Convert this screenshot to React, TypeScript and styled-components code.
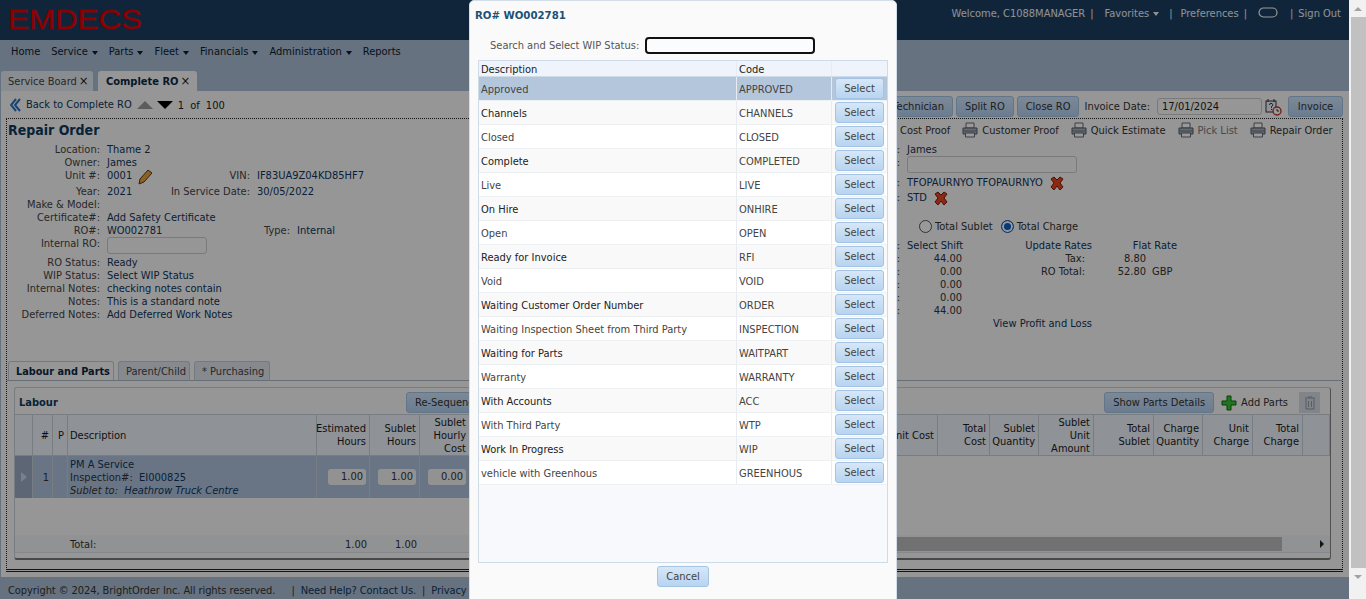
import React from 'react'
import styled, { createGlobalStyle } from 'styled-components'

const GlobalStyle = createGlobalStyle`
  html, body { margin: 0; padding: 0; height: 100%; overflow: hidden; }
  body { font-family: "DejaVu Sans Condensed", "DejaVu Sans", sans-serif; font-size: 11px; color: #333; }
  * { box-sizing: border-box; }
`

const Page = styled.div`
  display: flex;
  width: 1366px;
  height: 599px;
  overflow: hidden;
`

const Main = styled.div`
  position: relative;
  width: 1349px;
  height: 599px;
  display: flex;
  flex-direction: column;
  background: #aabed4;
`

const Scrollbar = styled.div`
  width: 17px;
  height: 599px;
  background: #f1f1f1;
  display: flex;
  flex-direction: column;
  align-items: center;
`

const ScrollThumb = styled.div`
  width: 15px;
  height: 551px;
  align-self: flex-end;
  background: #c1c1c1;
`

const ScrollEnd = styled.div`
  width: 17px;
  height: 17px;
  display: flex;
  align-items: center;
  justify-content: center;
`

const ScrollArrow = styled.span<{ $up?: boolean }>`
  width: 0;
  height: 0;
  border-left: 4px solid transparent;
  border-right: 4px solid transparent;
  ${(p) => (p.$up ? 'border-bottom' : 'border-top')}: 4px solid #a3a3a3;
`

const Dim = styled.div`
  position: absolute;
  inset: 0;
  background: rgba(0, 0, 0, 0.4);
`

const Header = styled.header`
  height: 40px;
  flex: none;
  background: #1b3e62;
  display: flex;
  justify-content: space-between;
  padding: 5px 8px 0 8px;
`

const UserBar = styled.div`
  display: flex;
  align-items: flex-start;
  padding-top: 2px;
  color: #eef2f6;
  gap: 5px;
  height: 20px;
  line-height: 14px;
`

const UserItem = styled.span<{ $l?: number; $r?: number }>`
  padding: 0 ${(p) => p.$r ?? 0}px 0 ${(p) => p.$l ?? 0}px;
  display: inline-flex;
  align-items: center;
`

const Nav = styled.nav`
  height: 31px;
  flex: none;
  display: flex;
  align-items: flex-start;
  padding: 5px 0 0 11px;
  gap: 11px;
  line-height: 13px;
  color: #0d1c2e;
`

const Caret = styled.span`
  display: inline-block;
  width: 0;
  height: 0;
  margin-left: 4px;
  vertical-align: 0;
  border-left: 3.5px solid transparent;
  border-right: 3.5px solid transparent;
  border-top: 4px solid currentColor;
`

const Tabs = styled.div`
  height: 20px;
  flex: none;
  display: flex;
  gap: 5px;
  padding-left: 1px;
`

const TabItem = styled.div<{ $active?: boolean; $w: number }>`
  width: ${(p) => p.$w}px;
  display: flex;
  align-items: center;
  gap: 2px;
  padding-left: ${(p) => (p.$active ? 8 : 7)}px;
  border-radius: 3px 3px 0 0;
  background: ${(p) => (p.$active ? '#fafafa' : '#e4ebf2')};
  color: ${(p) => (p.$active ? '#0d2a45' : '#444')};
  font-weight: ${(p) => (p.$active ? 700 : 400)};
  white-space: nowrap;
`

const TabClose = styled.span`
  font-size: 13px;
  font-weight: 400;
  line-height: 14px;
  color: #222;
`

const Content = styled.div`
  height: 486px;
  flex: none;
  margin: 0 0 0 1px;
  background: #fafafa;
  display: flex;
  flex-direction: column;
  padding: 0 6px 0 5px;
`

const Toolbar = styled.div`
  height: 27px;
  flex: none;
  display: flex;
  align-items: center;
  justify-content: space-between;
  padding: 0 0 0 4px;
`

const Group = styled.div<{ $gap?: number; $top?: number }>`
  display: flex;
  align-items: center;
  gap: ${(p) => p.$gap ?? 6}px;
  padding-top: ${(p) => p.$top ?? 0}px;
`

const LinkText = styled.span`
  color: #10365c;
  white-space: nowrap;
`

const Pager = styled.span`
  padding-top: 2px;
  word-spacing: 3px;
  color: #222;
`

const Arrow = styled.span<{ $up?: boolean; $dark?: boolean }>`
  display: inline-block;
  width: 0;
  height: 0;
  border-left: 8px solid transparent;
  border-right: 8px solid transparent;
  ${(p) => (p.$up ? 'border-bottom' : 'border-top')}: 8px solid ${(p) => (p.$dark ? '#000' : '#999')};
`

const ActionButton = styled.button`
  height: 21px;
  padding: 0 8px;
  border: 1px solid #a3c4e4;
  border-radius: 3px;
  background: linear-gradient(#cfe4fa, #b2d0f0);
  color: #333;
  font: inherit;
  white-space: nowrap;
`

const InvoiceButton = styled(ActionButton)`
  width: 55px;
`

const TextBox = styled.div<{ $w: number; $h?: number }>`
  width: ${(p) => p.$w}px;
  height: ${(p) => p.$h ?? 17}px;
  border: 1px solid #ccc;
  border-radius: 3px;
  background: #fafafa;
  padding: 0 4px;
  line-height: 15px;
  color: #222;
  flex: none;
`

const DateLabel = styled.span`
  margin: 0 4px 0 2px;
  color: #333;
`

const IconSlot = styled.span`
  display: inline-flex;
  margin-right: 3px;
`

const Order = styled.div`
  flex: 1;
  border: 1px dotted #222;
  border-bottom: 3px double #222;
  margin-bottom: 5px;
  display: flex;
  flex-direction: column;
  min-height: 0;
`

const Summary = styled.div`
  height: 242px;
  flex: none;
  display: grid;
  grid-template-columns: 861px 1fr;
`

const SummaryLeft = styled.div`
  padding-left: 1px;
`

const Title = styled.h1`
  margin: 2px 0 4px;
  font-size: 14px;
  line-height: 18px;
  color: #0c3a5f;
`

const FieldRow = styled.div<{ $h?: number }>`
  display: flex;
  height: ${(p) => p.$h ?? 13}px;
  line-height: 13px;
  white-space: nowrap;
`

const Label = styled.span<{ $w: number }>`
  width: ${(p) => p.$w}px;
  flex: none;
  text-align: right;
  color: #444;
  margin-right: 7px;
`

const Value = styled.span<{ $w?: number; $right?: boolean }>`
  color: #10365c;
  display: inline-flex;
  align-items: flex-start;
  gap: 6px;
  flex: none;
  svg { flex: none; }
  ${(p) => (p.$w ? `width: ${p.$w}px;` : '')}
  ${(p) => (p.$right ? 'justify-content: flex-end; color: #333;' : '')}
`

const Currency = styled.span`
  margin-left: 6px;
  color: #333;
`

const SummaryRight = styled.div``

const PrintRow = styled.div`
  height: 24px;
  display: flex;
  align-items: center;
  padding: 0 0 2px 32px;
  gap: 12px;
  color: #333;
  white-space: nowrap;
`

const PrintLink = styled.span<{ $off?: boolean }>`
  display: flex;
  align-items: center;
  gap: 4px;
  color: ${(p) => (p.$off ? '#777' : '#333')};
`

const Radios = styled.div`
  display: flex;
  align-items: center;
  margin: 13px 0 5px 51px;
  height: 15px;
  gap: 8px;
  color: #333;
`

const Radio = styled.span<{ $on?: boolean }>`
  display: inline-block;
  width: 13px;
  height: 13px;
  margin-right: 3px;
  vertical-align: -3px;
  border-radius: 50%;
  border: 1px solid ${(p) => (p.$on ? '#0a5fc4' : '#555')};
  background: ${(p) => (p.$on ? '#0a5fc4' : '#fff')};
  box-shadow: ${(p) => (p.$on ? 'inset 0 0 0 2px #fff' : 'none')};
`

const SubTabs = styled.div`
  height: 20px;
  flex: none;
  display: flex;
  gap: 4px;
  padding-left: 1px;
  border-bottom: 1px solid #aab8c6;
`

const SubTab = styled.div<{ $active?: boolean; $w: number }>`
  width: ${(p) => p.$w}px;
  display: flex;
  align-items: center;
  padding-left: 7px;
  border: 1px solid #c3ccd6;
  border-bottom: none;
  border-radius: 3px 3px 0 0;
  background: ${(p) => (p.$active ? '#fafafa' : '#dfe5ec')};
  font-weight: ${(p) => (p.$active ? 700 : 400)};
  font-size: ${(p) => (p.$active ? 10.8 : 11)}px;
  color: ${(p) => (p.$active ? '#0d2a45' : '#444')};
  white-space: nowrap;
`

const GridPanel = styled.div`
  margin: 6px 11px 0 7px;
  height: 173px;
  border: 1px solid #c8d0d8;
  border-right-color: #888;
  border-bottom: 2px solid #777;
  border-radius: 3px;
  display: flex;
  flex-direction: column;
`

const GridBar = styled.div`
  height: 26px;
  flex: none;
  display: flex;
  align-items: center;
  justify-content: space-between;
  padding: 3px 10px 0 4px;
`

const GridTitle = styled.div`
  width: 387px;
  font-weight: 700;
  color: #0c3a5f;
`

const AddParts = styled.span`
  display: flex;
  align-items: center;
  gap: 4px;
  margin-right: 4px;
`

const TrashBox = styled.div`
  width: 21px;
  height: 21px;
  display: flex;
  align-items: center;
  justify-content: center;
  background: #d7dde4;
`

const columns = '18px 20px 15px 249px 53px 50px 50px 415px 53px 52px 49px 55px 60px 49px 50px 50px 1fr'

const GridHead = styled.div`
  display: grid;
  grid-template-columns: ${columns};
  height: 42px;
  flex: none;
  background: #eef3fa;
  border-top: 1px solid #c8d0d8;
  border-bottom: 1px solid #c8d0d8;
`

const HeadCell = styled.div<{ $left?: boolean }>`
  display: flex;
  align-items: center;
  justify-content: ${(p) => (p.$left ? 'flex-start' : 'flex-end')};
  padding: 0 3px 0 ${(p) => (p.$left ? 2 : 3)}px;
  text-align: ${(p) => (p.$left ? 'left' : 'right')};
  line-height: 13px;
  color: #1c1c1c;
  border-right: 1px solid #c8d0d8;
`

const GridRow = styled.div`
  display: grid;
  grid-template-columns: ${columns};
  height: 42px;
  flex: none;
`

const RowCell = styled.div<{ $left?: boolean; $dark?: boolean }>`
  display: flex;
  flex-direction: column;
  justify-content: center;
  align-items: ${(p) => (p.$left ? 'flex-start' : p.$dark ? 'center' : 'flex-end')};
  padding: 0 3px 0 ${(p) => (p.$left ? 2 : 3)}px;
  line-height: 13px;
  background: ${(p) => (p.$dark ? '#99abc2' : '#b0c4de')};
  border-right: 1px solid #c8d0d8;
  white-space: nowrap;
`

const RowHandle = styled.span`
  width: 0;
  height: 0;
  border-top: 5px solid transparent;
  border-bottom: 5px solid transparent;
  border-left: 6px solid #c9d6e6;
`

const NumberBox = styled.div`
  width: 38px;
  height: 16px;
  border-radius: 3px;
  background: #f4f4f4;
  text-align: right;
  padding-right: 3px;
  line-height: 16px;
  color: #333;
`

const GridSpace = styled.div`
  flex: 1;
`

const TotalRow = styled.div`
  display: grid;
  grid-template-columns: 18px 20px 15px 249px 53px 50px 1fr;
  height: 18px;
  margin-bottom: 5px;
  flex: none;
  align-items: center;
  background: #f1f3f5;
  border-bottom: 1px solid #dde2e8;
`

const TotalCell = styled.div<{ $left?: boolean }>`
  padding: 2px 3px 0 ${(p) => (p.$left ? 2 : 3)}px;
  text-align: ${(p) => (p.$left ? 'left' : 'right')};
  color: #333;
`

const HScroll = styled.div`
  display: flex;
  height: 14px;
  margin-left: 100px;
  align-items: stretch;
`

const HThumb = styled.div`
  flex: 1;
  background: #bdbdbd;
`

const HEnd = styled.div`
  width: 48px;
  display: flex;
  align-items: center;
  justify-content: flex-end;
  padding-right: 6px;
`

const HArrow = styled.span`
  width: 0;
  height: 0;
  border-top: 4px solid transparent;
  border-bottom: 4px solid transparent;
  border-left: 4px solid #222;
`

const Footer = styled.footer`
  height: 22px;
  flex: none;
  display: flex;
  align-items: center;
  padding: 4px 0 0 8px;
  color: #333;
  letter-spacing: -0.08px;
  white-space: nowrap;
`

const Separator = styled.span<{ $l: number; $r: number }>`
  margin: 0 ${(p) => p.$r}px 0 ${(p) => p.$l}px;
`

const Modal = styled.div`
  position: absolute;
  left: 469px;
  top: 0;
  width: 428px;
  height: 610px;
  background: #fafafa;
  border: 1px solid #d4dee8;
  border-radius: 5px;
  padding: 0 8px;
  display: flex;
  flex-direction: column;
`

const ModalTitle = styled.div`
  height: 30px;
  padding-top: 8px;
  margin-left: -3px;
  font-size: 11.3px;
  font-weight: 700;
  color: #1a5276;
`

const SearchRow = styled.div`
  height: 29px;
  display: flex;
  align-items: center;
  padding-left: 12px;
  gap: 6px;
  color: #555;
`

const SearchInput = styled.div`
  width: 170px;
  height: 17px;
  background: #fafcfe;
  border: 2px solid #111;
  border-radius: 4px;
`

const StatusTable = styled.div`
  width: 410px;
  height: 503px;
  flex: none;
  background: #f7f9fc;
  border: 1px solid #cfdbe6;
`

const statusColumns = '258px 95px 1fr'

const StatusHead = styled.div`
  display: grid;
  grid-template-columns: ${statusColumns};
  height: 16px;
  background: #eff3fb;
  border-bottom: 1px solid #cfdbe6;
  color: #222;
`

const StatusRow = styled.div<{ $state: 'on' | 'odd' | 'even' }>`
  display: grid;
  grid-template-columns: ${statusColumns};
  height: 24px;
  align-items: stretch;
  background: ${(p) => (p.$state === 'on' ? '#b3c6dc' : p.$state === 'odd' ? '#f9f9f9' : '#fff')};
  border-bottom: 1px solid #eef1f4;
`

const StatusCell = styled.div<{ $strong?: boolean }>`
  display: flex;
  align-items: center;
  padding: 2px 0 0 2px;
  border-right: 1px solid #e8ecf0;
  color: ${(p) => (p.$strong ? '#222' : '#444')};
`

const ButtonCell = styled.div`
  padding: 1px 0 0 3px;
`

const SelectButton = styled.button`
  width: 49px;
  height: 21px;
  padding: 0;
  border: 1px solid #a3c4e4;
  border-radius: 3px;
  background: linear-gradient(#d6e7f8, #b8d4f0);
  color: #444;
  font: inherit;
`

const ModalActions = styled.div`
  display: flex;
  justify-content: center;
  padding-top: 3px;
`

const CancelButton = styled(SelectButton)`
  width: 52px;
`

const statuses: [string, string][] = [
  ['Approved', 'APPROVED'],
  ['Channels', 'CHANNELS'],
  ['Closed', 'CLOSED'],
  ['Complete', 'COMPLETED'],
  ['Live', 'LIVE'],
  ['On Hire', 'ONHIRE'],
  ['Open', 'OPEN'],
  ['Ready for Invoice', 'RFI'],
  ['Void', 'VOID'],
  ['Waiting Customer Order Number', 'ORDER'],
  ['Waiting Inspection Sheet from Third Party', 'INSPECTION'],
  ['Waiting for Parts', 'WAITPART'],
  ['Warranty', 'WARRANTY'],
  ['With Accounts', 'ACC'],
  ['With Third Party', 'WTP'],
  ['Work In Progress', 'WIP'],
  ['vehicle with Greenhous', 'GREENHOUS'],
]

const Logo = () => (
  <svg width="136" height="30" viewBox="0 0 136 30">
    <text x="0" y="24" fontFamily="Liberation Sans" fontWeight="400" fontSize="27" textLength="134" lengthAdjust="spacingAndGlyphs" fill="#e80000" stroke="#e80000" strokeWidth="0.3">
      EMDECS
    </text>
  </svg>
)

const ChatBubble = () => (
  <svg width="20" height="12" viewBox="0 0 20 12">
    <rect x="1" y="1" width="18" height="9" rx="4.5" fill="none" stroke="#fff" strokeWidth="1.2" />
  </svg>
)

const Pencil = () => (
  <svg width="15" height="16" viewBox="0 0 15 16">
    <path d="M1 15l1-5 8-9 4 3-8 9z" fill="#e8a33a" stroke="#5a3a10" />
  </svg>
)

const RedX = () => (
  <svg width="15" height="15" viewBox="0 0 15 15">
    <path d="M2 3l3-2 3 3 3-3 3 2-3 4 3 4-3 3-3-4-3 4-3-3 3-4z" fill="#e8451f" stroke="#7a1c0c" />
  </svg>
)

const CalendarClock = () => (
  <svg width="17" height="18" viewBox="0 0 17 18">
    <rect x="1" y="3" width="10" height="11" fill="#eef3fa" stroke="#334" />
    <path d="M3 1v3M9 1v3" stroke="#334" />
    <path d="M4.5 7a1.6 1.6 0 1 1 2 1.5v1.5M6.5 11v1" fill="none" stroke="#334" />
    <circle cx="12" cy="13" r="4" fill="#fff" stroke="#c0392b" strokeWidth="1.4" />
    <path d="M12 11v2h2" stroke="#333" fill="none" />
  </svg>
)

const Printer = () => (
  <svg width="16" height="16" viewBox="0 0 16 16">
    <path d="M4 1h8v5H4z" fill="#fff" stroke="#667" />
    <path d="M1 6h14v6H1z" fill="#a9b2bc" stroke="#555e68" />
    <path d="M1 9h14" stroke="#6b747e" />
    <path d="M3.5 11h9v4h-9z" fill="#fff" stroke="#667" />
  </svg>
)

const Plus = () => (
  <svg width="16" height="16" viewBox="0 0 16 16">
    <path d="M6 1h4v5h5v4h-5v5H6v-5H1V6h5z" fill="#38c438" stroke="#0e6a0e" />
  </svg>
)

const Trash = () => (
  <svg width="10" height="14" viewBox="0 0 10 14">
    <path d="M0 2h10M3 1h4M1 3v10h8V3M3.5 5v6M6.5 5v6" fill="none" stroke="#8f99a5" />
  </svg>
)

const Back = () => (
  <svg width="11" height="14" viewBox="0 0 11 14">
    <path d="M6 1L1 7l5 6M10 1L5 7l5 6" fill="none" stroke="#2b74c7" strokeWidth="2" />
  </svg>
)

const Field = ({ label, value }: { label: string; value?: string }) => (
  <FieldRow>
    <Label $w={92}>{label}</Label>
    <Value>{value}</Value>
  </FieldRow>
)

const App = () => {
  return (
    <Page>
      <GlobalStyle />
      <Main>
        <Header>
          <Logo />
          <UserBar>
            <span>Welcome, C1088MANAGER</span><span>|</span>
            <UserItem $l={6} $r={5}>Favorites<Caret /></UserItem><UserItem $r={3}>|</UserItem>
            <span>Preferences</span><span>|</span>
            <UserItem $l={6} $r={7}><ChatBubble /></UserItem><span>|</span>
            <span>Sign Out</span>
          </UserBar>
        </Header>
        <Nav>
          <span>Home</span>
          <span>Service<Caret /></span>
          <span>Parts<Caret /></span>
          <span>Fleet<Caret /></span>
          <span>Financials<Caret /></span>
          <span>Administration<Caret /></span>
          <span>Reports</span>
        </Nav>
        <Tabs>
          <TabItem $w={92}>Service Board <TabClose>×</TabClose></TabItem>
          <TabItem $active $w={99}>Complete RO <TabClose>×</TabClose></TabItem>
        </Tabs>
        <Content>
          <Toolbar>
            <Group $gap={5}>
              <Back />
              <LinkText>Back to Complete RO</LinkText>
              <Group $gap={4}>
                <Arrow $up />
                <Arrow $dark />
              </Group>
              <Pager>1 of 100</Pager>
            </Group>
            <Group $gap={3} $top={4}>
              <ActionButton>Technician</ActionButton>
              <ActionButton>Split RO</ActionButton>
              <ActionButton>Close RO</ActionButton>
              <DateLabel>Invoice Date:</DateLabel>
              <TextBox $w={105}>17/01/2024</TextBox>
              <IconSlot><CalendarClock /></IconSlot>
              <InvoiceButton>Invoice</InvoiceButton>
            </Group>
          </Toolbar>
          <Order>
            <Summary>
              <SummaryLeft>
                <Title>Repair Order</Title>
                <Field label="Location:" value="Thame 2" />
                <Field label="Owner:" value="James" />
                <FieldRow $h={16}>
                  <Label $w={92}>Unit #:</Label>
                  <Value $w={40}>0001 <Pencil /></Value>
                  <Label $w={103}>VIN:</Label>
                  <Value>IF83UA9Z04KD85HF7</Value>
                </FieldRow>
                <FieldRow>
                  <Label $w={92}>Year:</Label>
                  <Value $w={40}>2021</Value>
                  <Label $w={103}>In Service Date:</Label>
                  <Value>30/05/2022</Value>
                </FieldRow>
                <Field label="Make &amp; Model:" />
                <Field label="Certificate#:" value="Add Safety Certificate" />
                <FieldRow>
                  <Label $w={92}>RO#:</Label>
                  <Value $w={80}>WO002781</Value>
                  <Label $w={103}>Type:</Label>
                  <Value>Internal</Value>
                </FieldRow>
                <FieldRow $h={19}>
                  <Label $w={92}>Internal RO:</Label>
                  <TextBox $w={100} />
                </FieldRow>
                <Field label="RO Status:" value="Ready" />
                <Field label="WIP Status:" value="Select WIP Status" />
                <Field label="Internal Notes:" value="checking notes contain" />
                <Field label="Notes:" value="This is a standard note" />
                <Field label="Deferred Notes:" value="Add Deferred Work Notes" />
              </SummaryLeft>
              <SummaryRight>
                <PrintRow>
                  <PrintLink>Cost Proof</PrintLink>
                  <PrintLink><Printer />Customer Proof</PrintLink>
                  <PrintLink><Printer />Quick Estimate</PrintLink>
                  <PrintLink $off><Printer />Pick List</PrintLink>
                  <PrintLink><Printer />Repair Order</PrintLink>
                </PrintRow>
                <FieldRow $h={13}><Label $w={32}>Tech:</Label><Value>James</Value></FieldRow>
                <FieldRow $h={20}><Label $w={32}>PO:</Label><TextBox $w={170} /></FieldRow>
                <FieldRow $h={15}><Label $w={32}>By:</Label><Value>TFOPAURNYO TFOPAURNYO <RedX /></Value></FieldRow>
                <FieldRow $h={15}><Label $w={32}>Rate:</Label><Value>STD <RedX /></Value></FieldRow>
                <Radios>
                  <span><Radio />Total Sublet</span>
                  <span><Radio $on />Total Charge</span>
                </Radios>
                <FieldRow><Label $w={32}>Shift:</Label><Value $w={55}>Select Shift</Value><Value $w={130} $right><LinkText>Update Rates</LinkText></Value><Value $w={85} $right><LinkText>Flat Rate</LinkText></Value></FieldRow>
                <FieldRow><Label $w={32}>Cost:</Label><Value $w={55} $right>44.00</Value><Value $w={123} $right>Tax:</Value><Value $w={61} $right>8.80</Value></FieldRow>
                <FieldRow><Label $w={32}>Sub:</Label><Value $w={55} $right>0.00</Value><Value $w={123} $right>RO Total:</Value><Value $w={61} $right>52.80</Value><Currency>GBP</Currency></FieldRow>
                <FieldRow><Label $w={32}>Disc:</Label><Value $w={55} $right>0.00</Value></FieldRow>
                <FieldRow><Label $w={32}>Fee:</Label><Value $w={55} $right>0.00</Value></FieldRow>
                <FieldRow><Label $w={32}>Total:</Label><Value $w={55} $right>44.00</Value></FieldRow>
                <FieldRow><Label $w={32}> </Label><Value $w={185} $right><LinkText>View Profit and Loss</LinkText></Value></FieldRow>
              </SummaryRight>
            </Summary>
            <SubTabs>
              <SubTab $active $w={106}>Labour and Parts</SubTab>
              <SubTab $w={72}>Parent/Child</SubTab>
              <SubTab $w={76}>* Purchasing</SubTab>
            </SubTabs>
            <GridPanel>
              <GridBar>
                <Group $gap={0}>
                  <GridTitle>Labour</GridTitle>
                  <ActionButton>Re-Sequence</ActionButton>
                </Group>
                <Group $gap={7}>
                  <ActionButton>Show Parts Details</ActionButton>
                  <AddParts><Plus />Add Parts</AddParts>
                  <TrashBox><Trash /></TrashBox>
                </Group>
              </GridBar>
              <GridHead>
                <HeadCell />
                <HeadCell>#</HeadCell>
                <HeadCell>P</HeadCell>
                <HeadCell $left>Description</HeadCell>
                <HeadCell>Estimated Hours</HeadCell>
                <HeadCell>Sublet Hours</HeadCell>
                <HeadCell>Sublet Hourly Cost</HeadCell>
                <HeadCell />
                <HeadCell>Unit Cost</HeadCell>
                <HeadCell>Total Cost</HeadCell>
                <HeadCell>Sublet Quantity</HeadCell>
                <HeadCell>Sublet Unit Amount</HeadCell>
                <HeadCell>Total Sublet</HeadCell>
                <HeadCell>Charge Quantity</HeadCell>
                <HeadCell>Unit Charge</HeadCell>
                <HeadCell>Total Charge</HeadCell>
                <HeadCell />
              </GridHead>
              <GridRow>
                <RowCell $dark><RowHandle /></RowCell>
                <RowCell>1</RowCell>
                <RowCell />
                <RowCell $left>
                  <LinkText>PM A Service</LinkText>
                  <span>Inspection#: &nbsp;<LinkText>EI000825</LinkText></span>
                  <em>Sublet to: &nbsp;<LinkText>Heathrow Truck Centre</LinkText></em>
                </RowCell>
                <RowCell><NumberBox>1.00</NumberBox></RowCell>
                <RowCell><NumberBox>1.00</NumberBox></RowCell>
                <RowCell><NumberBox>0.00</NumberBox></RowCell>
              </GridRow>
              <GridSpace />
              <TotalRow>
                <TotalCell />
                <TotalCell />
                <TotalCell />
                <TotalCell $left>Total:</TotalCell>
                <TotalCell>1.00</TotalCell>
                <TotalCell>1.00</TotalCell>
                <HScroll>
                  <HThumb />
                  <HEnd><HArrow /></HEnd>
                </HScroll>
              </TotalRow>
            </GridPanel>
          </Order>
        </Content>
        <Footer>
          <span>Copyright © 2024, BrightOrder Inc. All rights reserved.</span>
          <Separator $l={16} $r={6}>|</Separator>
          <LinkText>Need Help? Contact Us.</LinkText>
          <Separator $l={6} $r={6}>|</Separator>
          <LinkText>Privacy Policy</LinkText>
        </Footer>
        <Dim />
        <Modal>
          <ModalTitle>RO# WO002781</ModalTitle>
          <SearchRow>
            <span>Search and Select WIP Status:</span>
            <SearchInput />
          </SearchRow>
          <StatusTable>
            <StatusHead>
              <StatusCell $strong>Description</StatusCell>
              <StatusCell $strong>Code</StatusCell>
              <div />
            </StatusHead>
            {statuses.map(([name, code], i) => (
              <StatusRow key={code} $state={i === 0 ? 'on' : i % 2 ? 'odd' : 'even'}>
                <StatusCell $strong={i % 2 === 1}>{name}</StatusCell>
                <StatusCell>{code}</StatusCell>
                <ButtonCell><SelectButton>Select</SelectButton></ButtonCell>
              </StatusRow>
            ))}
          </StatusTable>
          <ModalActions>
            <CancelButton>Cancel</CancelButton>
          </ModalActions>
        </Modal>
      </Main>
      <Scrollbar>
        <ScrollEnd><ScrollArrow $up /></ScrollEnd>
        <ScrollThumb />
        <ScrollEnd><ScrollArrow /></ScrollEnd>
      </Scrollbar>
    </Page>
  )
}

export default App
